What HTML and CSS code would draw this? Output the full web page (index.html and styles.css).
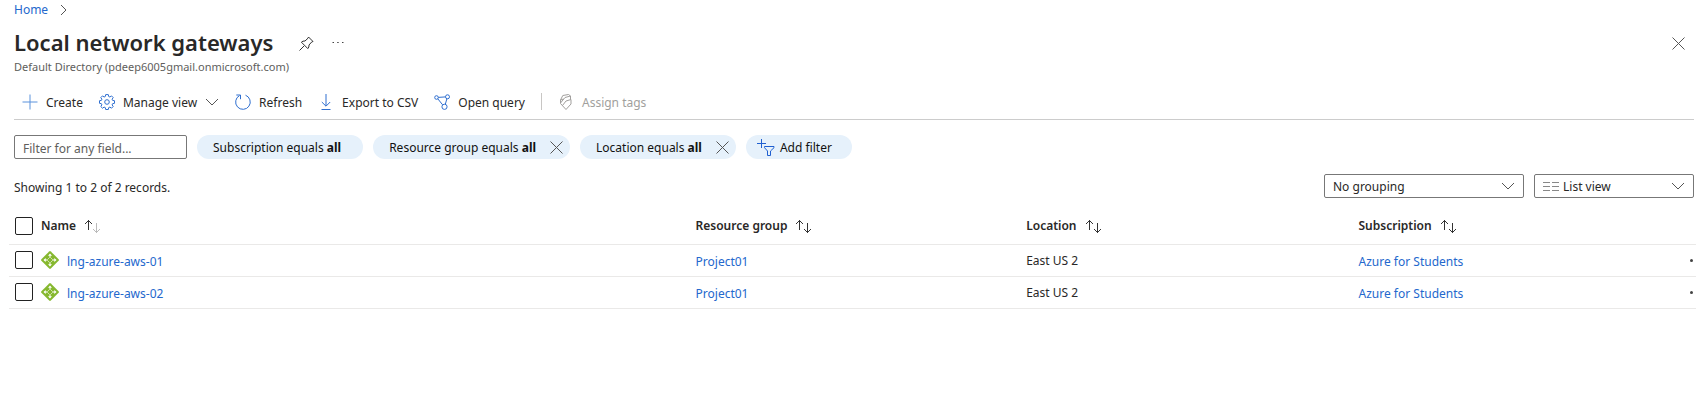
FILE: index.html
```html
<!DOCTYPE html>
<html lang="en">
<head>
<meta charset="utf-8">
<title>Local network gateways</title>
<link rel="stylesheet" href="styles.css">
</head>
<body>
<svg class="sprite" aria-hidden="true">
  <symbol id="chevron-down" viewBox="0 0 14 8"><path d="M1 1l6 6 6-6"/></symbol>
  <symbol id="cross" viewBox="0 0 13 13"><path d="M.5.5l12 12M12.500.5l-12 12"/></symbol>
  <symbol id="sort" viewBox="0 0 17 13"><path d="M4.500 10V0M1 4L4.500.5 8 4"/><path class="down" d="M12.500 3v10M9 9l3.500 3.500L16 9"/></symbol>
  <symbol id="gateway" viewBox="0 0 18 18">
    <path fill="#86b82f" d="M8.200.4q.8-.7 1.600 0l7.800 7.800q.7.8 0 1.600l-7.800 7.800q-.8.7-1.600 0L.4 9.800q-.7-.8 0-1.600z"/>
    <path fill="#fff" d="M9 2.500l2 2.200H9.500v2.300h-1V4.700H7zM9 15.500l-2-2.200h1.500V11h1v2.300H11zM2.500 9l2.200-2v1.500H7v1H4.700V11zM15.500 9l-2.200 2V9.500H11v-1h2.300V7z"/>
    <path stroke="#e3f0c8" stroke-width=".8" fill="none" d="M7 7l4 4M11 7l-4 4"/>
    <circle cx="9" cy="9" r="1.400" fill="#86b82f"/>
  </symbol>
</svg>

<header class="top">
  <nav class="crumbs" aria-label="Breadcrumb">
    <a href="#">Home</a>
    <svg class="line-icon crumb-arrow" viewBox="0 0 7 12"><path d="M1 1l5 5-5 5"/></svg>
  </nav>
  <div class="title-row">
    <h1>Local network gateways</h1>
    <button class="icon-button" aria-label="Pin">
      <svg class="line-icon pin" viewBox="0 0 15 15"><path d="M.5 14.500l4.500-4.500M9.500 1l4.500 4.500-1.200.4L10 9q.3 2.200-1.200 3.600L2.400 6.200Q3.800 4.700 6 5L9 2.200z"/></svg>
    </button>
    <button class="icon-button" aria-label="More">
      <svg class="more" viewBox="0 0 12 4"><path d="M.5 1.500H2M5.200 1.500h1.500M10 1.500h1.500"/></svg>
    </button>
    <button class="icon-button close" aria-label="Close"><svg class="line-icon cross"><use href="#cross"/></svg></button>
  </div>
  <p class="directory">Default Directory (pdeep6005gmail.onmicrosoft.com)</p>
</header>

<main>
  <div class="toolbar" role="toolbar">
    <button class="command"><svg class="tool-icon" viewBox="0 0 16 16"><path stroke="#5b92dc" d="M8 .5v15M.5 8h15"/></svg><span class="label">Create</span></button>
    <button class="command"><svg class="tool-icon" viewBox="0 0 16 16"><circle cx="8" cy="8" r="2.300"/><path d="M6.700.6h2.600l.4 1.900 1.200.5 1.600-1.100 1.700 1.700L13.100 5.200l.5 1.200 1.900.3v2.600l-1.900.4-.5 1.200 1.100 1.600-1.700 1.700-1.600-1.100-1.200.5-.4 1.900H6.700l-.4-1.900-1.200-.5-1.600 1.100-1.700-1.700 1.100-1.600-.5-1.200-1.900-.4V6.700l1.900-.3.500-1.200-1.100-1.600 1.700-1.700L5.100 3l1.200-.5z"/></svg><span class="label">Manage view</span><svg class="line-icon chevron"><use href="#chevron-down"/></svg></button>
    <button class="command"><svg class="tool-icon" viewBox="0 0 16 16"><path d="M10.500 1.200A7.300 7.300 0 1 1 4.500 1.600M1.300 1h4.200v4.200"/></svg><span class="label">Refresh</span></button>
    <button class="command"><svg class="tool-icon" viewBox="0 0 16 16"><path d="M8 0v12M3.800 8L8 12.200 12.200 8M3.500 15.500h9"/></svg><span class="label">Export to CSV</span></button>
    <button class="command"><svg class="tool-icon" viewBox="0 0 16 16"><circle cx="2.500" cy="3.500" r="1.800"/><circle cx="13.500" cy="2.800" r="2"/><circle cx="10.500" cy="12.800" r="2.600"/><path d="M4.300 3.400l7.200-.5M3.800 4.800l4.800 6M12.900 4.700l-1.600 5.600"/></svg><span class="label">Open query</span></button>
    <span class="divider"></span>
    <button class="command" disabled><svg class="tool-icon" viewBox="0 0 16 16"><path d="M2.500 6L4.800 1.500 10.500.5l2 1.500M2.500 6v3.500L8 15.500l5-5.500V5.500M2.500 9L7 3.500 12.500 2v3.500M4.500 11.500L8 7l5-1.500M2.500 6l3-1"/></svg><span class="label">Assign tags</span></button>
  </div>

  <div class="filters">
    <input class="search" type="text" aria-label="Filter" placeholder="Filter for any field...">
    <button class="pill"><span class="label">Subscription equals <b>all</b></span></button>
    <div class="pill closable"><button class="label">Resource group equals <b>all</b></button><button class="icon-button" aria-label="Remove resource group filter"><svg class="line-icon cross"><use href="#cross"/></svg></button></div>
    <div class="pill closable"><button class="label">Location equals <b>all</b></button><button class="icon-button" aria-label="Remove location filter"><svg class="line-icon cross"><use href="#cross"/></svg></button></div>
    <button class="pill add"><svg class="filter-icon" viewBox="0 0 19 17"><path d="M5.500 0v9M1 4.500h9M8.500 7.500H18v1.200L14.500 12v4.500h-3V12L8.500 8.700z"/></svg><span class="label">Add filter</span></button>
  </div>

  <div class="summary">
    <p>Showing 1 to 2 of 2 records.</p>
    <div class="drop grouping">
      <select aria-label="Grouping"><option>No grouping</option></select>
      <svg class="line-icon chevron"><use href="#chevron-down"/></svg>
    </div>
    <div class="drop view">
      <svg class="list-icon" viewBox="0 0 16 11"><path d="M0 1.500h7M9 1.500h7M0 5.500h7M9 5.500h7M0 9.500h7M9 9.500h7"/></svg>
      <select aria-label="View"><option>List view</option></select>
      <svg class="line-icon chevron"><use href="#chevron-down"/></svg>
    </div>
  </div>

  <table>
    <colgroup><col class="col-check"><col class="col-name"><col class="col-group"><col class="col-location"><col><col class="col-menu"></colgroup>
    <thead>
      <tr>
        <th><input type="checkbox" aria-label="Select all"></th>
        <th>Name<svg class="sort ascending"><use href="#sort"/></svg></th>
        <th>Resource group<svg class="sort"><use href="#sort"/></svg></th>
        <th>Location<svg class="sort"><use href="#sort"/></svg></th>
        <th>Subscription<svg class="sort"><use href="#sort"/></svg></th>
        <th></th>
      </tr>
    </thead>
    <tbody>
      <tr>
        <td><input type="checkbox" aria-label="Select lng-azure-aws-01"></td>
        <td><div class="resource"><svg class="gateway"><use href="#gateway"/></svg><a href="#">lng-azure-aws-01</a></div></td>
        <td><a href="#">Project01</a></td>
        <td><span class="label">East US 2</span></td>
        <td><a href="#">Azure for Students</a></td>
        <td><button class="row-menu" aria-label="Row actions"></button></td>
      </tr>
      <tr>
        <td><input type="checkbox" aria-label="Select lng-azure-aws-02"></td>
        <td><div class="resource"><svg class="gateway"><use href="#gateway"/></svg><a href="#">lng-azure-aws-02</a></div></td>
        <td><a href="#">Project01</a></td>
        <td><span class="label">East US 2</span></td>
        <td><a href="#">Azure for Students</a></td>
        <td><button class="row-menu" aria-label="Row actions"></button></td>
      </tr>
    </tbody>
  </table>
</main>
</body>
</html>
```
FILE: styles.css
```css
* { box-sizing: border-box; }
body {
  margin: 0;
  background: #fff;
  color: #292827;
  font: 12px/18px "Noto Sans", "Open Sans", sans-serif;
}
h1, p { margin: 0; }
a { color: #2468cd; text-decoration: none; }
button, input, select { font: inherit; color: inherit; }
button { padding: 0; border: 0; background: none; }
svg { display: block; flex: none; fill: none; }
.sprite { position: absolute; width: 0; height: 0; }
.line-icon { stroke: #555; }
.label { display: inline-block; padding-top: 2px; }

.top { padding: 0 11px 0 14px; }
.crumbs { display: flex; align-items: center; gap: 12px; height: 20px; }
.crumb-arrow { width: 7px; height: 12px; }
.title-row { display: flex; align-items: center; height: 38px; margin-top: 4px; }
h1 { padding-bottom: 2px; font-size: 22px; line-height: 32px; font-weight: 600; }
.icon-button { display: flex; align-items: center; }
.pin { width: 15px; height: 15px; margin-left: 26px; stroke: #333; }
.more { width: 12px; height: 4px; margin-left: 18px; stroke: #444; }
.close { margin-left: auto; }
.cross { width: 13px; height: 13px; }
.directory { color: #605e5c; font-size: 11px; line-height: 16px; margin-top: -3px; }

.toolbar {
  display: flex;
  align-items: center;
  gap: 16px;
  height: 36px;
  margin: 9px 2px 0 14px;
  padding-left: 8px;
  border-bottom: 1px solid #ccc;
}
.command { display: flex; align-items: center; gap: 8px; }
.command:disabled { color: #a19f9d; }
.tool-icon { width: 16px; height: 16px; stroke: #2f6fd0; }
.command:disabled .tool-icon { stroke: #a19f9d; }
.chevron { width: 14px; height: 8px; }
.divider { width: 1px; height: 17px; background: #c8c6c4; }

.filters { display: flex; gap: 10px; margin: 15px 14px 0; }
.search {
  width: 173px;
  height: 24px;
  padding: 2px 8px 0;
  border: 1px solid #777;
  border-radius: 2px;
  background: #fff;
}
.search::placeholder { color: #605e5c; opacity: 1; }
.pill {
  display: flex;
  align-items: center;
  gap: 5px;
  height: 24px;
  padding: 0 22px 0 16px;
  border-radius: 12px;
  background: #e6f1fb;
  color: #111;
}
.pill.closable { gap: 14px; padding-right: 7px; }
.add { padding: 0 20px 0 10px; }
.filter-icon { width: 19px; height: 17px; stroke: #1f5fd0; }

.summary { display: flex; align-items: center; gap: 10px; margin: 15px 2px 0 14px; }
.summary p { margin-right: auto; padding-top: 4px; }
.drop {
  display: grid;
  align-items: center;
  height: 24px;
  border: 1px solid #777;
  border-radius: 2px;
}
.drop > * { grid-row: 1; }
.drop select {
  grid-column: 1;
  width: 100%;
  height: 22px;
  padding: 2px 28px 0 8px;
  border: 0;
  background: none;
  appearance: none;
}
.drop .chevron, .list-icon { grid-column: 1; pointer-events: none; }
.drop .chevron { justify-self: end; margin-right: 8px; }
.grouping { width: 200px; }
.view { width: 160px; }
.view select { padding-left: 28px; }
.list-icon { width: 16px; height: 11px; margin-left: 8px; stroke: #888; }

table {
  width: calc(100% - 9px);
  margin: 10px 0 0 9px;
  border-collapse: collapse;
  table-layout: fixed;
}
.col-check { width: 32px; }
.col-name { width: 38.8%; }
.col-group { width: 19.6%; }
.col-location { width: 19.7%; }
.col-menu { width: 8px; }
th, td { height: 32px; padding: 0; border-bottom: 1px solid #eae9e8; text-align: left; }
th { height: 36px; padding-top: 1px; font-weight: 600; }
td a { display: inline-block; padding-top: 3px; }
.sort { display: inline-block; width: 17px; height: 13px; margin-left: 8px; vertical-align: -3px; stroke: #333; }
.ascending { --down: #bbb; }
.down { stroke: var(--down, #333); }
input[type="checkbox"] {
  display: block;
  width: 18px;
  height: 18px;
  margin: 0 0 0 6px;
  border: 1px solid #222;
  border-radius: 2px;
  background: #fff;
  appearance: none;
}
.resource { display: flex; align-items: center; gap: 8px; }
.gateway { width: 18px; height: 18px; }
.row-menu { display: block; width: 3px; height: 3px; margin-left: 2px; border-radius: 50%; background: #444; }
```
